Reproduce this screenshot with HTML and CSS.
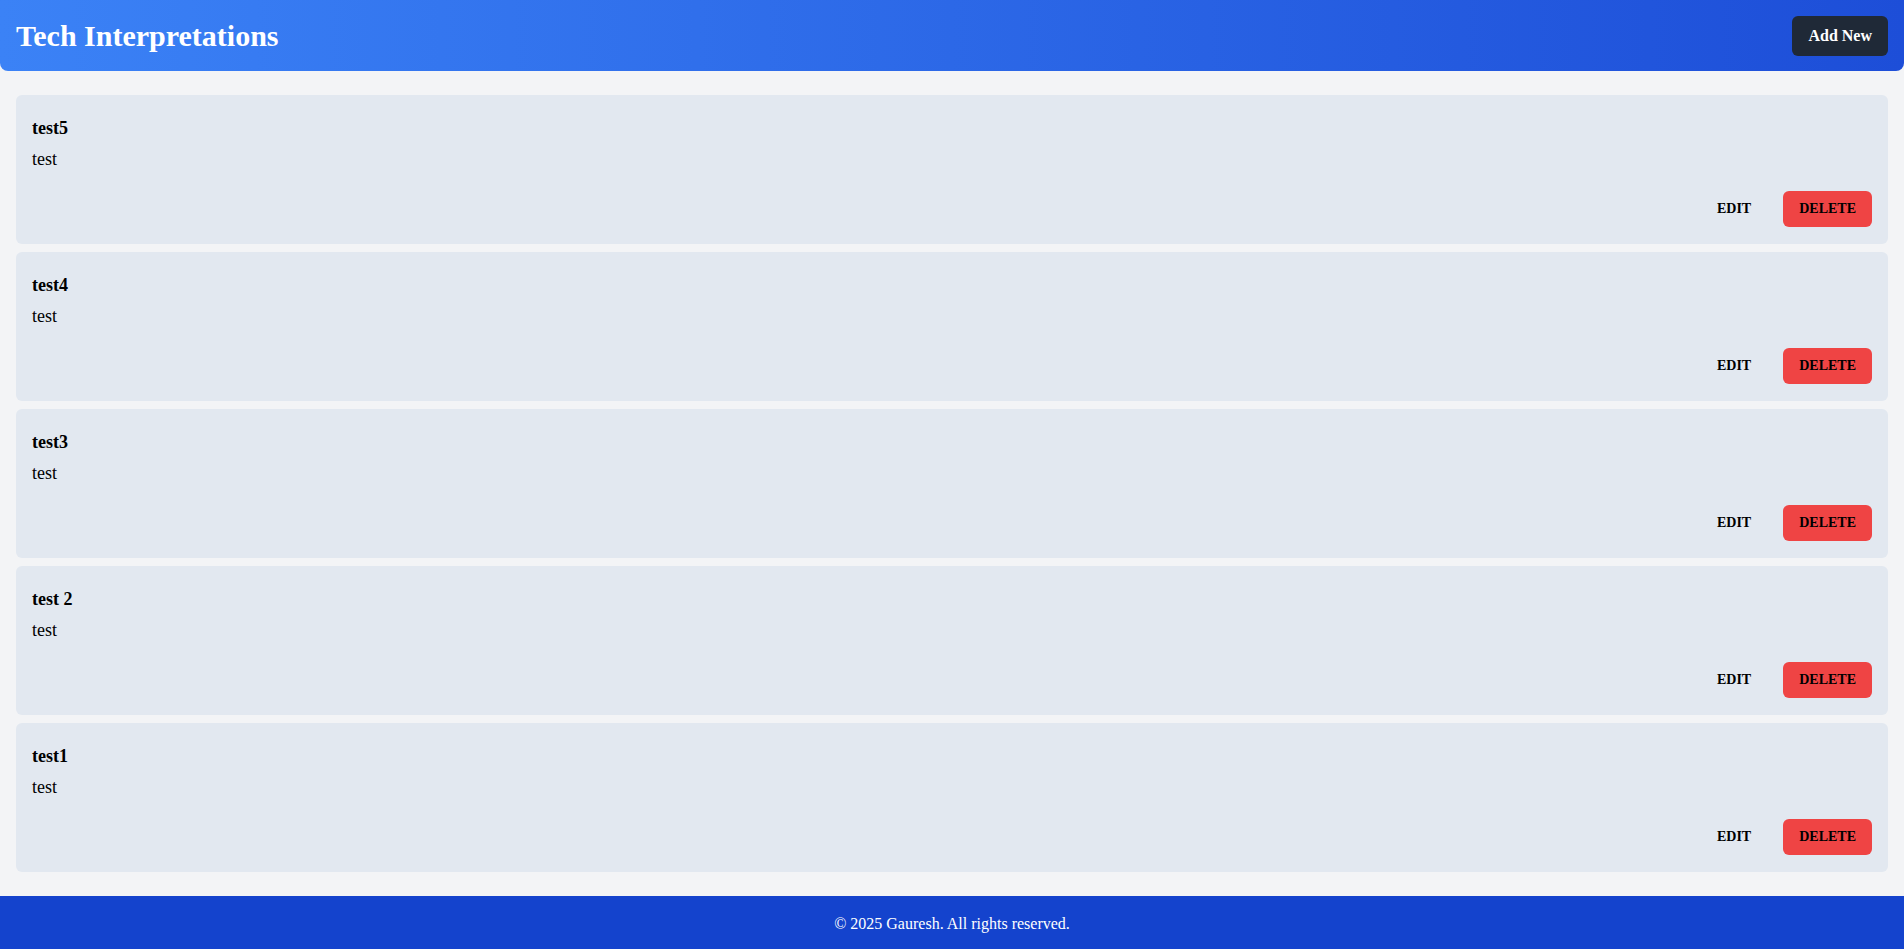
FILE: index.html
```html
<!DOCTYPE html>
<html lang="en">
<head>
<meta charset="utf-8">
<title>Tech Interpretations</title>
<link rel="stylesheet" href="styles.css">
</head>
<body>
<header class="topbar">
  <h1 class="brand">Tech Interpretations</h1>
  <button class="btn-add">Add New</button>
</header>
<main class="content">
  <article class="card">
    <h2 class="card-title">test5</h2>
    <p class="card-text">test</p>
    <div class="card-actions"><button class="btn-edit">EDIT</button><button class="btn-delete">DELETE</button></div>
  </article>
  <article class="card">
    <h2 class="card-title">test4</h2>
    <p class="card-text">test</p>
    <div class="card-actions"><button class="btn-edit">EDIT</button><button class="btn-delete">DELETE</button></div>
  </article>
  <article class="card">
    <h2 class="card-title">test3</h2>
    <p class="card-text">test</p>
    <div class="card-actions"><button class="btn-edit">EDIT</button><button class="btn-delete">DELETE</button></div>
  </article>
  <article class="card">
    <h2 class="card-title">test 2</h2>
    <p class="card-text">test</p>
    <div class="card-actions"><button class="btn-edit">EDIT</button><button class="btn-delete">DELETE</button></div>
  </article>
  <article class="card">
    <h2 class="card-title">test1</h2>
    <p class="card-text">test</p>
    <div class="card-actions"><button class="btn-edit">EDIT</button><button class="btn-delete">DELETE</button></div>
  </article>
</main>
<footer class="footer">© 2025 Gauresh. All rights reserved.</footer>
</body>
</html>
```

FILE: styles.css
```css
* { box-sizing: border-box; }
html, body { margin: 0; padding: 0; }
body {
  background: #f3f4f6;
  font-family: "Liberation Serif", "Times New Roman", serif;
  color: #000;
  font-size: 16px;
  line-height: 24px;
}
.topbar {
  height: 71px;
  padding: 0 16px;
  display: flex;
  align-items: center;
  justify-content: space-between;
  background: linear-gradient(to right, #3b82f6, #1d4ed8);
  border-radius: 0 0 8px 8px;
}
.brand {
  margin: 0;
  font-size: 30px;
  line-height: 36px;
  font-weight: bold;
  color: #fff;
}
.btn-add {
  height: 40px;
  padding: 0 16px;
  border: 0;
  border-radius: 6px;
  background: #1f2937;
  color: #fff;
  font-family: inherit;
  font-size: 16px;
  font-weight: bold;
  line-height: 24px;
  cursor: pointer;
}
.content {
  padding: 24px 16px;
  display: flex;
  flex-direction: column;
  gap: 8px;
}
.card {
  background: #e2e8f0;
  border-radius: 6px;
  padding: 19px 16px 17px;
}
.card-title {
  margin: 0 0 5px;
  font-size: 18px;
  line-height: 28px;
  font-weight: bold;
}
.card-text {
  margin: 0;
  font-size: 18px;
  line-height: 24px;
}
.card-actions {
  margin-top: 20px;
  display: flex;
  justify-content: flex-end;
}
.btn-edit, .btn-delete {
  height: 36px;
  padding: 0 16px;
  border: 0;
  border-radius: 6px;
  font-family: inherit;
  font-size: 14px;
  font-weight: bold;
  line-height: 20px;
  color: #000;
  cursor: pointer;
}
.btn-edit { background: transparent; margin-right: 16px; }
.btn-delete { background: #ef4444; }
.footer {
  background: #1443cd;
  color: #fff;
  text-align: center;
  padding: 16px;
  font-size: 16px;
  line-height: 24px;
}
```
